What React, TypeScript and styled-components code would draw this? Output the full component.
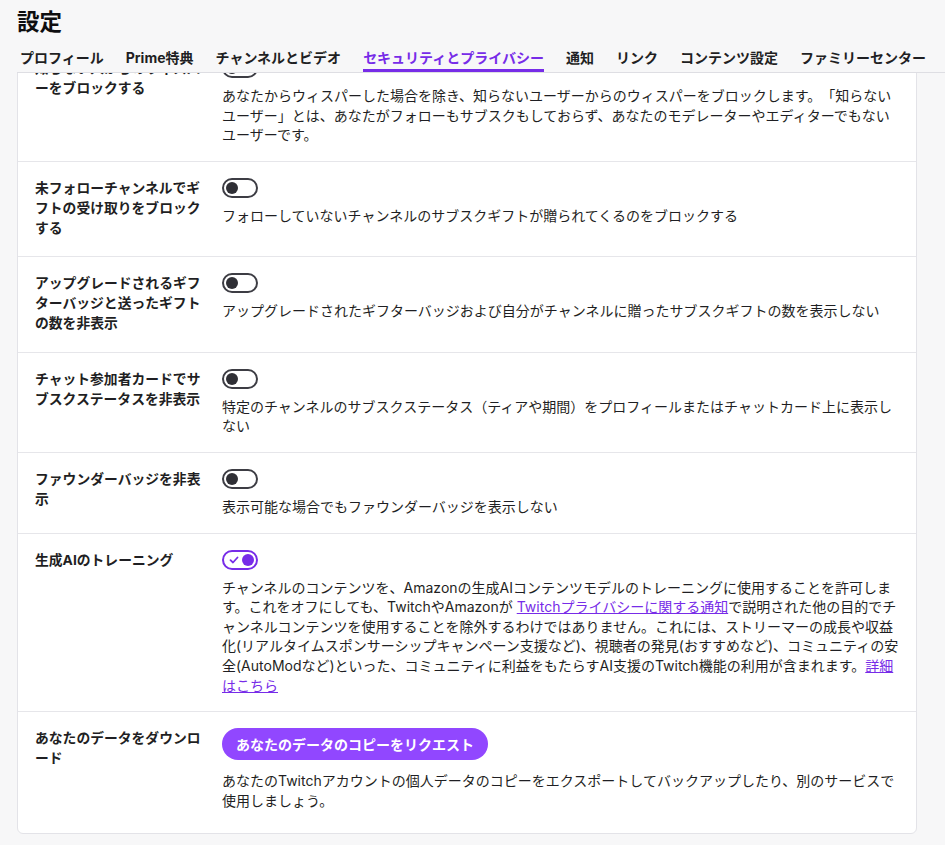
import { useLayoutEffect, useRef } from "react";
import styled, { createGlobalStyle } from "styled-components";

const GlobalStyle = createGlobalStyle`
  html, body {
    margin: 0;
    height: 100%;
    background: #f7f7f8;
  }
  body {
    font-family: Inter, "Noto Sans CJK JP", sans-serif;
    color: #1f1f23;
    text-spacing-trim: space-all;
    line-break: loose;
  }
  #root {
    height: 100%;
  }
`;

const tabs = [
  "プロフィール",
  "Prime特典",
  "チャンネルとビデオ",
  "セキュリティとプライバシー",
  "通知",
  "リンク",
  "コンテンツ設定",
  "ファミリーセンター",
];

type Setting = {
  label: string;
  desc: string;
  on?: boolean;
};

const settings: Setting[] = [
  {
    label: "知らない人からのウィスパーをブロックする",
    desc: "あなたからウィスパーした場合を除き、知らないユーザーからのウィスパーをブロックします。「知らないユーザー」とは、あなたがフォローもサブスクもしておらず、あなたのモデレーターやエディターでもないユーザーです。",
  },
  {
    label: "未フォローチャンネルでギフトの受け取りをブロックする",
    desc: "フォローしていないチャンネルのサブスクギフトが贈られてくるのをブロックする",
  },
  {
    label: "アップグレードされるギフターバッジと送ったギフトの数を非表示",
    desc: "アップグレードされたギフターバッジおよび自分がチャンネルに贈ったサブスクギフトの数を表示しない",
  },
  {
    label: "チャット参加者カードでサブスクステータスを非表示",
    desc: "特定のチャンネルのサブスクステータス（ティアや期間）をプロフィールまたはチャットカード上に表示しない",
  },
  {
    label: "ファウンダーバッジを非表示",
    desc: "表示可能な場合でもファウンダーバッジを表示しない",
  },
];

const Toggle = ({ on }: { on?: boolean }): JSX.Element => (
  <ToggleTrack on={!!on}>
    {on && (
      <svg width="10" height="8" viewBox="0 0 10 8">
        <path
          d="M1.5 4.2 L4 6.5 L8.5 1.5"
          fill="none"
          stroke="#772ce8"
          strokeWidth="1.8"
          strokeLinecap="round"
          strokeLinejoin="round"
        />
      </svg>
    )}
    <Thumb on={!!on} />
  </ToggleTrack>
);

const App = (): JSX.Element => {
  const scrollRef = useRef<HTMLDivElement>(null);
  const firstRef = useRef<HTMLDivElement>(null);

  // スクロール位置を再現
  useLayoutEffect(() => {
    const box = scrollRef.current;
    const row = firstRef.current;
    if (!box || !row) return;
    const diff =
      row.getBoundingClientRect().top - box.getBoundingClientRect().top;
    box.scrollTop = diff + 31;
  }, []);

  return (
    <Page>
      <GlobalStyle />
      <Header>
        <Title>設定</Title>
        <TabBar>
          {tabs.map((t) => (
            <Tab key={t} active={t === "セキュリティとプライバシー"}>
              {t}
            </Tab>
          ))}
        </TabBar>
      </Header>

      <Scroller ref={scrollRef}>
        <SectionTitle>セキュリティ</SectionTitle>
        <Card>
          <Row>
            <Label>メールアドレス</Label>
            <Control>
              <Desc>アカウントの確認済みメールアドレスを管理します。</Desc>
            </Control>
          </Row>
        </Card>

        <SectionTitle>プライバシー</SectionTitle>
        <Card>
          <Row>
            <Label>ブロック中のユーザー</Label>
            <Control>
              <Desc>ブロックしたユーザーの一覧を表示・管理します。</Desc>
            </Control>
          </Row>
          {settings.map((s, i) => (
            <Row key={s.label} ref={i === 0 ? firstRef : undefined}>
              <Label>{s.label}</Label>
              <Control>
                <Toggle on={s.on} />
                <Desc>{s.desc}</Desc>
              </Control>
            </Row>
          ))}
          <Row>
            <Label>生成AIのトレーニング</Label>
            <Control>
              <Toggle on />
              <Desc>
                チャンネルのコンテンツを、Amazonの生成AIコンテンツモデルのトレーニングに使用することを許可します。これをオフにしても、TwitchやAmazonが{" "}
                <Link href="#">Twitchプライバシーに関する通知</Link>
                で説明された他の目的でチャンネルコンテンツを使用することを除外するわけではありません。これには、ストリーマーの成長や収益化(リアルタイムスポンサーシップキャンペーン支援など)、視聴者の発見(おすすめなど)、コミュニティの安全(AutoModなど)といった、コミュニティに利益をもたらすAI支援のTwitch機能の利用が含まれます。
                <Link href="#">詳細はこちら</Link>
              </Desc>
            </Control>
          </Row>
          <Row last>
            <Label>あなたのデータをダウンロード</Label>
            <Control>
              <PrimaryButton>あなたのデータのコピーをリクエスト</PrimaryButton>
              <Desc>
                あなたのTwitchアカウントの個人データのコピーをエクスポートしてバックアップしたり、別のサービスで使用しましょう。
              </Desc>
            </Control>
          </Row>
        </Card>
      </Scroller>
    </Page>
  );
};

export default App;

const Page = styled.div`
  height: 100vh;
  display: flex;
  flex-direction: column;
  overflow: hidden;
`;

const Header = styled.header`
  flex: none;
  padding: 7px 0 0 17px;
`;

const Title = styled.h1`
  margin: 0;
  font-size: 22.5px;
  line-height: 30px;
  font-weight: 700;
  color: #0e0e10;
`;

const TabBar = styled.nav`
  display: flex;
  gap: 22px;
  padding-left: 3px;
  border-bottom: 1px solid #dedee3;
  white-space: nowrap;
`;

const Tab = styled.div<{ active: boolean }>`
  padding: 11px 0 1px;
  font-size: 14px;
  line-height: 20px;
  font-weight: 700;
  color: ${(props) => (props.active ? "#772ce8" : "#1f1f23")};
  border-bottom: 3px solid
    ${(props) => (props.active ? "#772ce8" : "transparent")};
`;

const Scroller = styled.div`
  flex: 1;
  overflow-y: auto;
  padding: 0 28px 13px 17px;
  scrollbar-width: none;
  &::-webkit-scrollbar {
    display: none;
  }
`;

const SectionTitle = styled.h2`
  margin: 24px 0 10px;
  font-size: 17px;
  font-weight: 700;
`;

const Card = styled.section`
  background: #ffffff;
  border: 1px solid #e3e3e8;
  border-radius: 6px;
  padding-bottom: 7px;
`;

const Row = styled.div<{ last?: boolean }>`
  display: grid;
  grid-template-columns: 170px 1fr;
  column-gap: 17px;
  padding: 16px 17px;
  border-bottom: ${(props) => (props.last ? "none" : "1px solid #e6e6ea")};
`;

const Label = styled.div`
  padding-bottom: 2.5px;
  font-size: 13.8px;
  line-height: 20px;
  font-weight: 700;
  color: #1f1f23;
`;

const Control = styled.div`
  display: flex;
  flex-direction: column;
  align-items: flex-start;
  min-width: 0;
`;

const ToggleTrack = styled.div<{ on: boolean }>`
  box-sizing: border-box;
  width: 36px;
  height: 20px;
  margin-bottom: 8px;
  border: 2px solid ${(props) => (props.on ? "#772ce8" : "#3d3d44")};
  border-radius: 10px;
  display: flex;
  align-items: center;
  justify-content: ${(props) => (props.on ? "space-between" : "flex-start")};
  padding: 0 2px 0 ${(props) => (props.on ? "5px" : "2px")};

  & > svg {
    display: block;
  }
`;

const Thumb = styled.span<{ on: boolean }>`
  width: 12px;
  height: 12px;
  border-radius: 50%;
  background: ${(props) => (props.on ? "#772ce8" : "#2f2f35")};
`;

const Desc = styled.p`
  margin: 0;
  font-size: 14px;
  line-height: 19.6px;
  color: #1f1f23;
`;

const Link = styled.a`
  color: #772ce8;
  text-decoration: underline;
`;

const PrimaryButton = styled.button`
  height: 32px;
  padding: 0 14px;
  margin-bottom: 11px;
  border: none;
  border-radius: 16px;
  background: #9147ff;
  color: #ffffff;
  font-family: inherit;
  font-size: 14px;
  font-weight: 700;
  cursor: pointer;
`;
